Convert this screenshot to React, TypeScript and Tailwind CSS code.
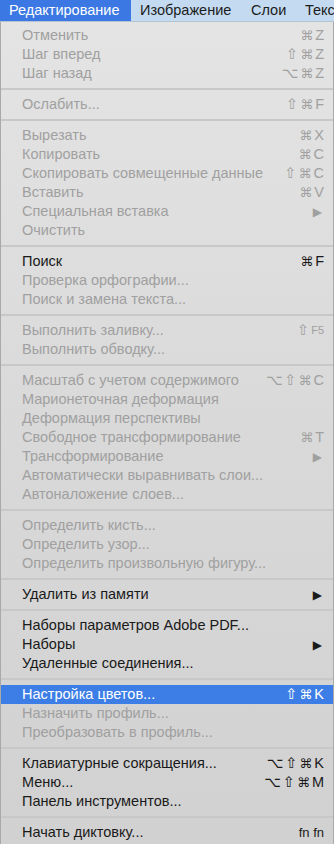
import React from 'react';

type Item = { label: string; keys?: string; sub?: boolean; on?: boolean; hl?: boolean };

// null = separator
const items: (Item | null)[] = [
  { label: 'Отменить', keys: '⌘Z' },
  { label: 'Шаг вперед', keys: '⇧⌘Z' },
  { label: 'Шаг назад', keys: '⌥⌘Z' },
  null,
  { label: 'Ослабить...', keys: '⇧⌘F' },
  null,
  { label: 'Вырезать', keys: '⌘X' },
  { label: 'Копировать', keys: '⌘C' },
  { label: 'Скопировать совмещенные данные', keys: '⇧⌘C' },
  { label: 'Вставить', keys: '⌘V' },
  { label: 'Специальная вставка', sub: true },
  { label: 'Очистить' },
  null,
  { label: 'Поиск', keys: '⌘F', on: true },
  { label: 'Проверка орфографии...' },
  { label: 'Поиск и замена текста...' },
  null,
  { label: 'Выполнить заливку...', keys: '⇧F5' },
  { label: 'Выполнить обводку...' },
  null,
  { label: 'Масштаб с учетом содержимого', keys: '⌥⇧⌘C' },
  { label: 'Марионеточная деформация' },
  { label: 'Деформация перспективы' },
  { label: 'Свободное трансформирование', keys: '⌘T' },
  { label: 'Трансформирование', sub: true },
  { label: 'Автоматически выравнивать слои...' },
  { label: 'Автоналожение слоев...' },
  null,
  { label: 'Определить кисть...' },
  { label: 'Определить узор...' },
  { label: 'Определить произвольную фигуру...' },
  null,
  { label: 'Удалить из памяти', sub: true, on: true },
  null,
  { label: 'Наборы параметров Adobe PDF...', on: true },
  { label: 'Наборы', sub: true, on: true },
  { label: 'Удаленные соединения...', on: true },
  null,
  { label: 'Настройка цветов...', keys: '⇧⌘K', on: true, hl: true },
  { label: 'Назначить профиль...' },
  { label: 'Преобразовать в профиль...' },
  null,
  { label: 'Клавиатурные сокращения...', keys: '⌥⇧⌘K', on: true },
  { label: 'Меню...', keys: '⌥⇧⌘M', on: true },
  { label: 'Панель инструментов...', on: true },
  null,
  { label: 'Начать диктовку...', keys: 'fn fn', on: true },
];

const Keys: React.FC<{ k: string }> = ({ k }) => {
  if (k === 'fn fn') return <span className="text-[13px]">fn fn</span>;
  if (k === '⇧F5')
    return (
      <span className="flex items-center gap-[2px]">
        <span>⇧</span>
        <span className="text-[11px]">F5</span>
      </span>
    );
  return (
    <span className="flex items-center gap-[2px]">
      {k.split('').map((c, i) => (
        <span key={i} className={c === '⌘' ? 'text-[13px]' : ''}>
          {c}
        </span>
      ))}
    </span>
  );
};

export default function App() {
  return (
    <div className="w-[334px] h-[844px] overflow-hidden bg-[#d4d4d4] [font-family:'Liberation_Sans','DejaVu_Sans',sans-serif]">
      <div className="h-[22px] flex items-center overflow-hidden bg-[#c3daf0] border-b border-[#b5c4d2] text-[14.5px] text-[#1c1c1c] whitespace-nowrap">
        <div className="h-full shrink-0 flex items-center px-[9px] w-[131px] bg-[#3b78e3] text-white">Редактирование</div>
        <div className="shrink-0 pl-[9px] w-[120px]">Изображение</div>
        <div className="shrink-0 w-[54px]">Слои</div>
        <div className="shrink-0">Текст</div>
      </div>
      <div className="h-[822px] bg-gradient-to-b from-[#e4e4e4] via-[#d9d9d9] to-[#d1d1d1] border-x border-[#a9a9a9] pt-[4px]">
        {items.map((it, i) =>
          it === null ? (
            <div key={i} className="h-[12px] flex items-center">
              <div className="h-[2px] w-full bg-[#c8c8c8]" />
            </div>
          ) : (
            <div
              key={i}
              className={
                'h-[19px] flex items-center justify-between pl-[21px] pr-[9px] text-[14.5px] whitespace-nowrap ' +
                (it.hl ? 'bg-[#3d7ee6] text-white' : it.on ? 'text-[#1a1a1a]' : 'text-[#a0a0a0]')
              }
            >
              <span>{it.label}</span>
              {it.keys && <Keys k={it.keys} />}
              {it.sub && <span className="text-[12px] pr-[2px]">▶</span>}
            </div>
          )
        )}
      </div>
    </div>
  );
}
